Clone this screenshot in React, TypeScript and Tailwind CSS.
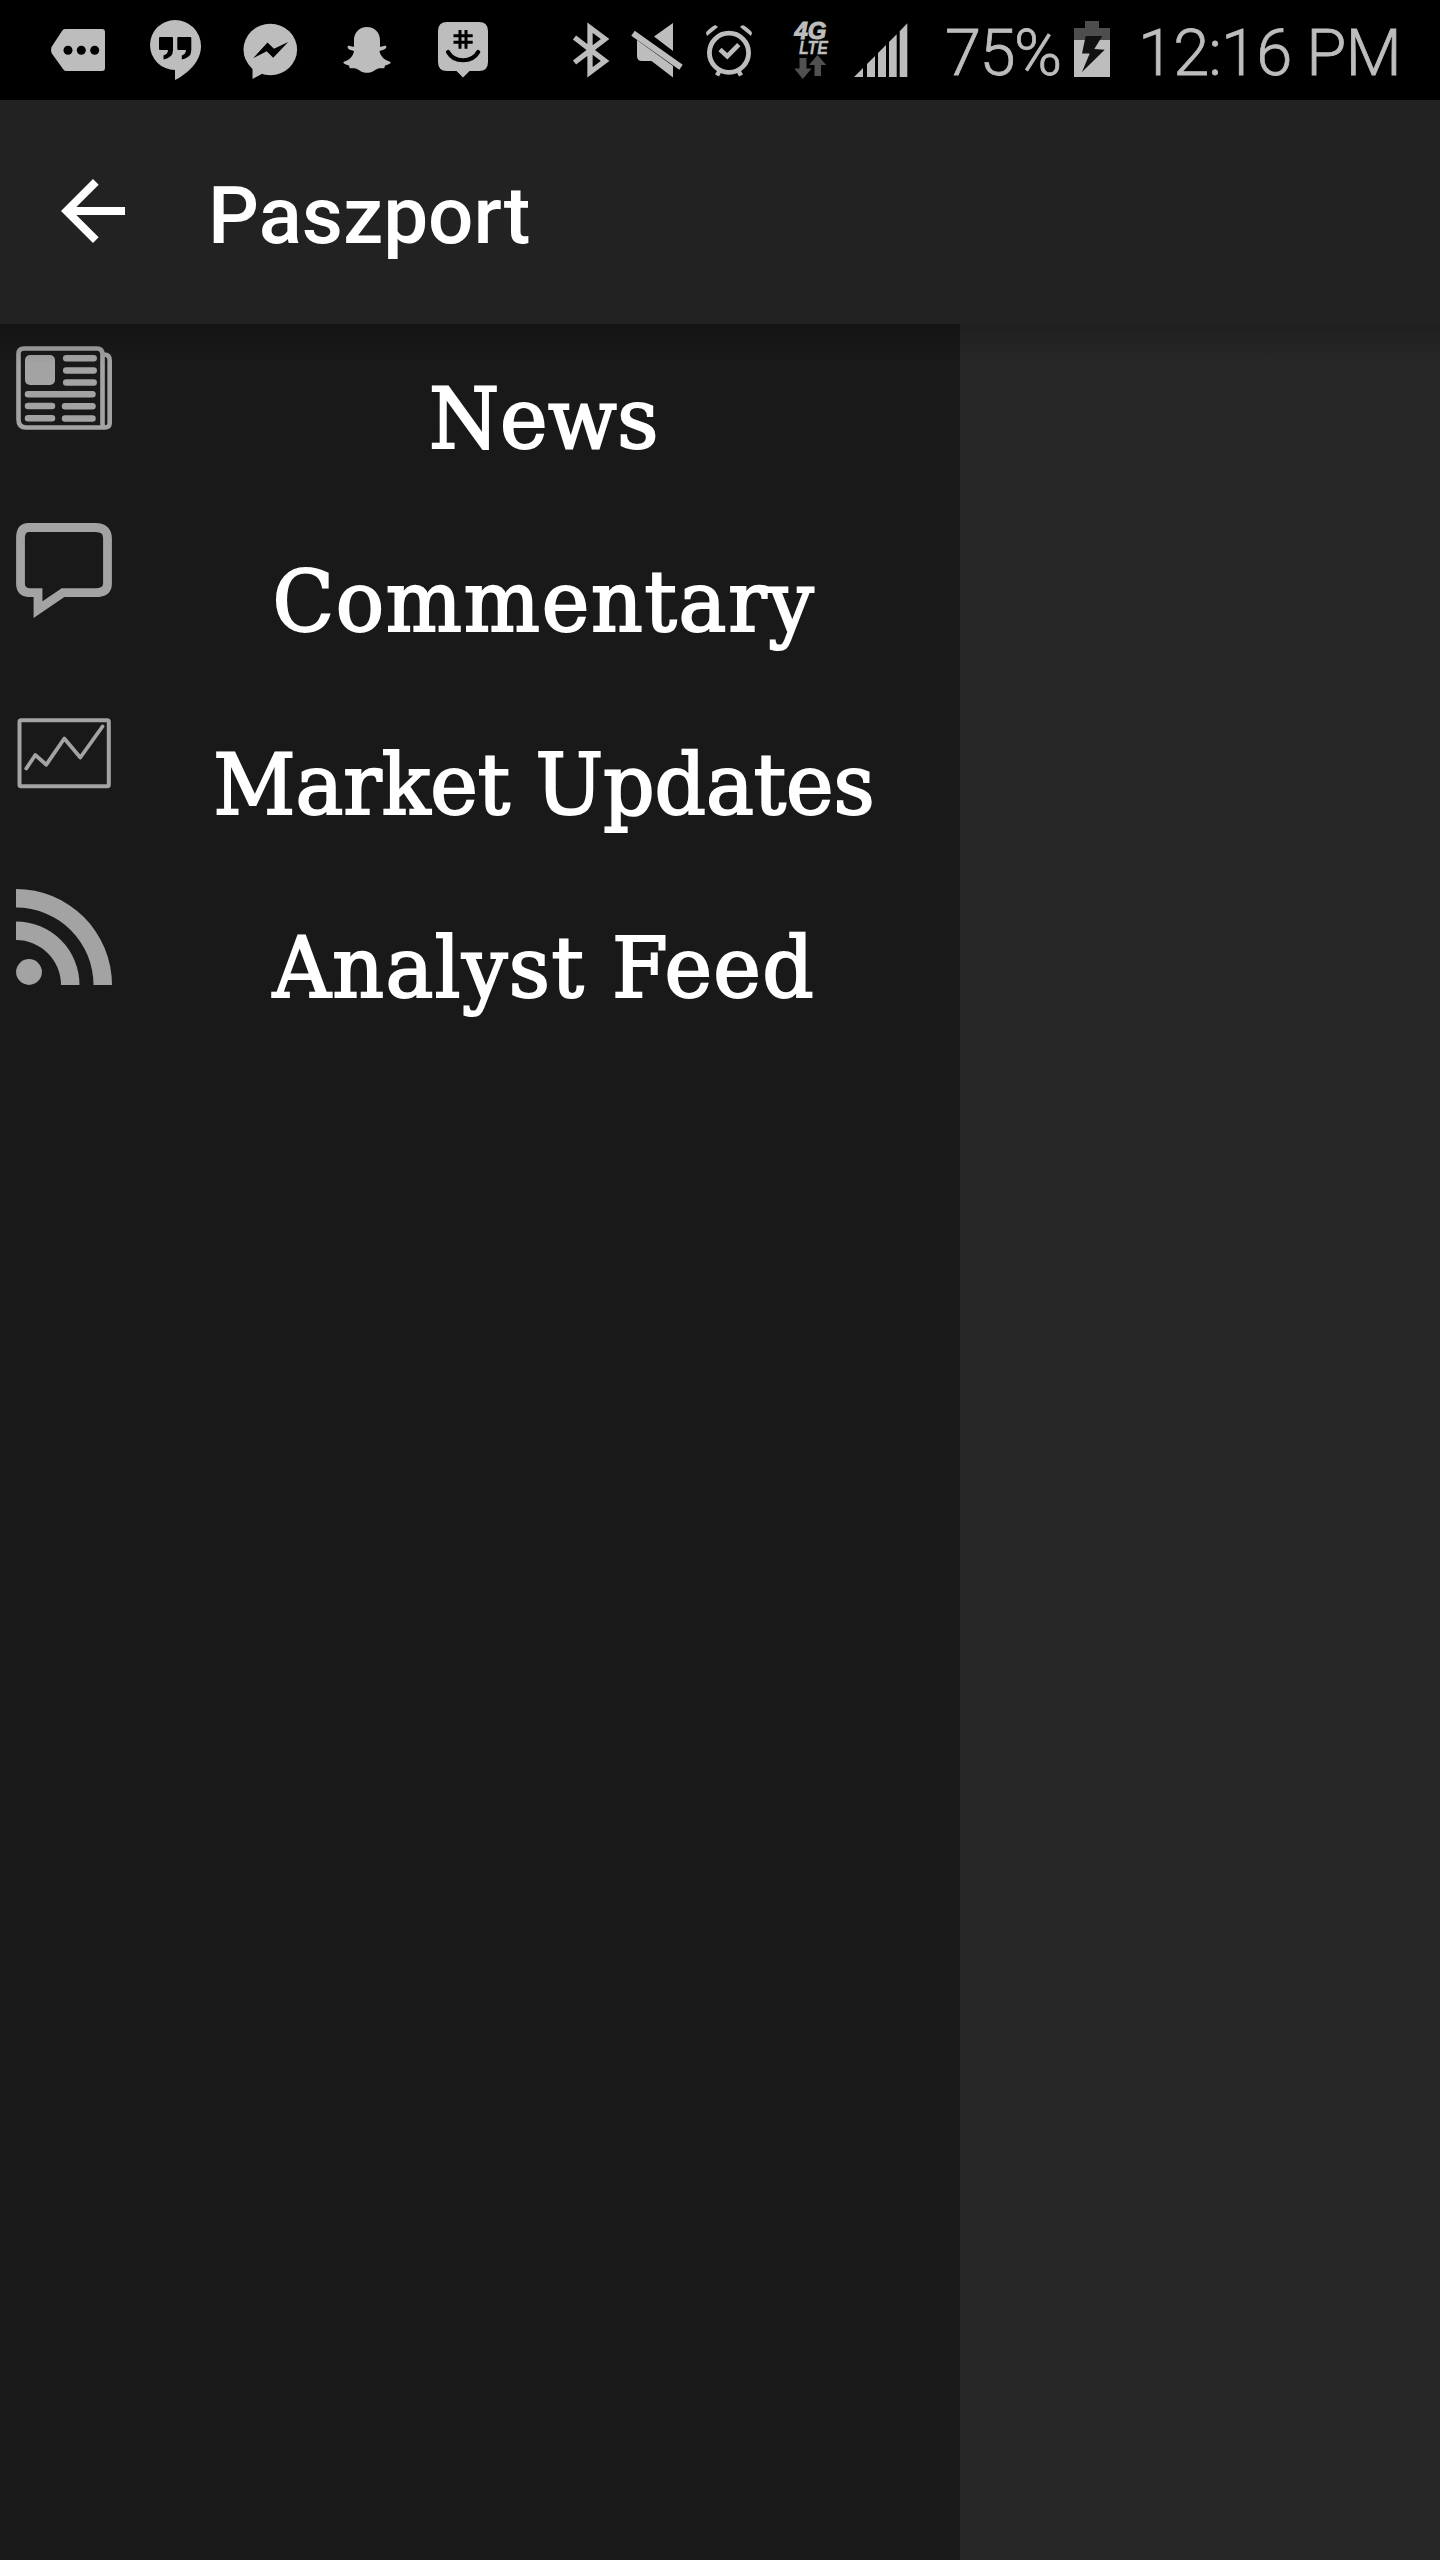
import type { ReactNode } from "react";

/* Status glyphs share the bar's own coordinate space, so each one crops a slice of it. */
function Glyph({ x, w, className = "", children }: { x: number; w: number; className?: string; children: ReactNode }) {
  return (
    <svg className={`shrink-0 ${className}`} width={w} height={100} viewBox={`${x} 0 ${w} 100`} fill="#bdbdbd">
      {children}
    </svg>
  );
}

function StatusBar() {
  return (
    <header className="flex h-[100px] items-center bg-black text-[65px] leading-[100px] text-[#bdbdbd]">
      <Glyph x={50} w={56} className="ml-[50px]">
        <path d="M64 29h38q3 0 3 3v36q0 3-3 3H66q-2 0-3-2L51.500 53q-1-3 0-6L62 31q1-2 3-2z" />
        <g fill="#000">
          <circle cx="68" cy="50.200" r="4.500" />
          <circle cx="81.300" cy="50.200" r="4.500" />
          <circle cx="94.700" cy="50.200" r="4.500" />
        </g>
      </Glyph>
      <Glyph x={148} w={54} className="ml-[42px]">
        <path d="M175 20a26 26 0 0 1 26 26c0 15-12 27-26 34V70a25 25 0 0 1 0-50z" />
        <path fill="#000" d="M160 37h12q1 0 1 1v12q0 8-9.500 9.500v-4Q168 54 168 50h-8q-1 0-1-1V38q0-1 1-1zM178.300 37h12q1 0 1 1v12q0 8-9.500 9.500v-4Q186 54 186 50h-7.700q-1 0-1-1V38q0-1 1-1z" />
      </Glyph>
      <Glyph x={243} w={55} className="ml-[41px]">
        <ellipse cx="270.300" cy="49.500" rx="26.800" ry="25.700" />
        <path d="M252.500 66v13l11-6z" />
        <path fill="#000" d="M253.300 58l14.200-15.500 6.500 6.300 14.200-6.800-15 15.700-6.500-6.400z" />
      </Glyph>
      <Glyph x={343} w={49} className="ml-[45px]">
        <path d="M367 27c8 0 13 6 13 13v6.500c2 .8 4-1.500 6-.5 1.500 2-1.500 4-6.500 5 1 5.500 5 9 10 10.500 2.500 1 1 2.500-4.500 4-.5 1.500 0 2.500-1.500 2.700-3 0-5-.5-7.500 1.300-3 2-4.500 3.200-9 3.200s-6-1.200-9-3.200c-2.500-1.800-4.500-1.300-7.500-1.300-1.500-.2-1-1.200-1.500-2.700-5.500-1.500-7-3-4.500-4 5-1.500 8.500-5 9.500-10.500-5-1-7.500-3-6-5 2-1 4 1.300 6 .5V40c0-7 5-13 13-13z" />
      </Glyph>
      <Glyph x={437} w={52} className="ml-[45px]">
        <path d="M447 22h32q9 0 9 9v31q0 9-9 9h-9.500L463 77.500 456.500 71H447q-9 0-9-9V31q0-9 9-9z" />
        <g fill="none" stroke="#000">
          <path strokeWidth="3" d="M460 30v18.700M466 30v18.700M453.500 35.800h19.200M453.500 42.300h19.200" />
          <path strokeWidth="4.200" strokeLinecap="round" d="M448 52c6 11 24 11 30.200 0" />
        </g>
      </Glyph>
      <Glyph x={570} w={42} className="ml-[81px]">
        <path fill="none" stroke="#bdbdbd" strokeWidth="5.300" strokeMiterlimit="10" d="M574.500 62.500L605 39 590 27.700v44.600L605 61 574.500 37.500" />
      </Glyph>
      <Glyph x={630} w={54} className="ml-[18px]">
        <path d="M654 36.500L673 23v28zM637 40l36 26v11.500L651.500 61H642q-5 0-5-5z" />
        <path stroke="#bdbdbd" strokeWidth="6" d="M633 33.200l48 34" />
      </Glyph>
      <Glyph x={704} w={50} className="ml-[20px]">
        <g fill="none" stroke="#bdbdbd">
          <circle cx="729" cy="52.800" r="19.600" strokeWidth="4.800" />
          <path strokeWidth="4.600" d="M720 49.500l7.300 6.700 11.500-11.500" />
          <path strokeWidth="4.500" d="M720 70l-3 5.500M738 70l3 5.500" />
        </g>
        <path d="M706 33q0-2 8-7.500 2-1 4 1.500L707 36zM752 33q0-2-8-7.500-2-1-4 1.500L751 36z" />
      </Glyph>
      <Glyph x={788} w={50} className="ml-[34px]">
        <g fontFamily="Liberation Sans, sans-serif" fontWeight="700" fontStyle="italic" stroke="#bdbdbd">
          <text x="794.500" y="38.600" fontSize="24.500" strokeWidth="1" textLength="32" lengthAdjust="spacingAndGlyphs">4G</text>
          <text x="799" y="54" fontSize="18" strokeWidth=".3" textLength="29" lengthAdjust="spacingAndGlyphs">LTE</text>
        </g>
        <path fill="#505050" d="M799.500 58h7v10.500h5L802.800 79l-8.500-10.500h5.200zM817.500 55l8.700 10h-5.200v11h-6.500V65H809z" />
      </Glyph>
      <Glyph x={853} w={55} className="ml-[15px]">
        <path d="M854 77l9-9v9zM867 77V64l8-8v21zM878 77V53l8-8v32zM889 77V42l7.700-7.700V77zM899.700 77V31.300l7.600-8V77z" />
      </Glyph>
      <span className="ml-[37px] w-[115px] font-[Roboto] font-light whitespace-nowrap tracking-[-1.500px] [-webkit-text-stroke:0.8px_#bdbdbd]"><span className="relative top-[3px]">75%</span></span>
      <Glyph x={1074} w={36} className="ml-[14px]">
        <path fill="#4d4d4d" d="M1085 21h14v7h11v12h-36V28h11z" />
        <path d="M1074 40h36v37h-36z" />
        <path fill="#111" d="M1085.700 36h16.600l-8 13 10.400.7L1082 72l7.700-18.500H1082z" />
      </Glyph>
      <span className="ml-[28px] font-[Roboto] font-light whitespace-nowrap tracking-[-0.900px] [-webkit-text-stroke:0.8px_#bdbdbd]"><span className="relative top-[3px]">12:16 PM</span></span>
    </header>
  );
}

const newsIcon = (
  <svg width="96" height="96" viewBox="16 340 96 96" fill="#a3a3a3">
    <g fill="none" stroke="#a3a3a3">
      <path strokeWidth="4.600" d="M24 348.500h73q5.500 0 5.500 6V424q0 3 2.500 3.500H26q-7.500 0-7.500-8V354q0-5.500 5.500-5.500z" />
      <path strokeWidth="4.600" d="M104 354.500q5.700 0 5.700 6V423q0 4.500-5 4.500" />
      <path strokeWidth="6.500" strokeLinecap="round" d="M66.200 358.200h27.500M66.200 370.500h27.500M66.200 382.500h27.500M28 394.200h64.500M28 406h24M65 406.300h27.500M28 418.200h24M65 418.500h27.500" />
    </g>
    <rect x="25" y="355" width="30" height="30" rx="5" />
  </svg>
);

const commentIcon = (
  <svg width="96" height="96" viewBox="16 523 96 96" fill="none" stroke="#a3a3a3" strokeWidth="8.800">
    <path d="M28.500 527.500h67q12 0 12 11v45q0 9.200-12 9.200H63L38 609.700v-17h-9.500q-8-1-8-9.200v-45q0-11 8-11z" />
  </svg>
);

const chartIcon = (
  <svg width="96" height="96" viewBox="16 706 96 96" fill="none" stroke="#a3a3a3">
    <rect x="19.500" y="720.200" width="89.300" height="66" rx="1.500" strokeWidth="4" />
    <path strokeWidth="3.800" strokeLinecap="round" strokeLinejoin="round" d="M26.300 768.500l9-13.500 11 9.700 18-26.200 16 19 22.200-31" />
  </svg>
);

const feedIcon = (
  <svg width="96" height="96" viewBox="16 889 96 96" fill="#a3a3a3">
    <circle cx="29" cy="972" r="12.900" />
    <path d="M16 921.500A63.500 63.500 0 0 1 79.500 985H61a45 45 0 0 0-45-45zM16 889a96 96 0 0 1 96 96H93.500A77.500 77.500 0 0 0 16 907.500z" />
  </svg>
);

const items = [
  { label: "News", icon: newsIcon, spacing: "tracking-[0.500px]" },
  { label: "Commentary", icon: commentIcon, spacing: "tracking-[1.700px]" },
  { label: "Market Updates", icon: chartIcon, spacing: "tracking-[0px]" },
  { label: "Analyst Feed", icon: feedIcon, spacing: "tracking-[1.400px]" },
];

export default function App() {
  return (
    <div className="flex h-[2560px] w-[1440px] flex-col overflow-hidden bg-[#272727]">
      <StatusBar />
      <div className="flex h-[224px] items-center bg-[#222222] pl-[45px]">
        <svg className="-mt-[2px]" width="96" height="96" viewBox="0 0 24 24" fill="#fff">
          <path d="M20 11H7.830l5.590-5.590L12 4l-8 8 8 8 1.410-1.410L7.830 13H20v-2z" />
        </svg>
        <h1 className="ml-[67px] pt-[7px] font-[Roboto] text-[80px] font-medium leading-none text-white">Paszport</h1>
      </div>
      <div className="relative flex-1">
        <nav className="h-full w-[960px] bg-[#191919]">
          {items.map((item) => (
            <a key={item.label} className="flex h-[183px] items-start pl-4">
              <span className="mt-4 shrink-0">{item.icon}</span>
              <span
                className={`ml-[16px] flex-1 scale-x-105 pt-[3px] text-center font-['DejaVu_Serif_Condensed','DejaVu_Serif',serif] text-[85px] leading-[183px] [font-stretch:condensed] whitespace-nowrap text-white [-webkit-text-stroke:2px_#fff] ${item.spacing}`}
              >
                {item.label}
              </span>
            </a>
          ))}
        </nav>
        <div className="absolute inset-x-0 top-0 h-[40px] bg-linear-to-b from-black/20 to-transparent" />
      </div>
    </div>
  );
}
